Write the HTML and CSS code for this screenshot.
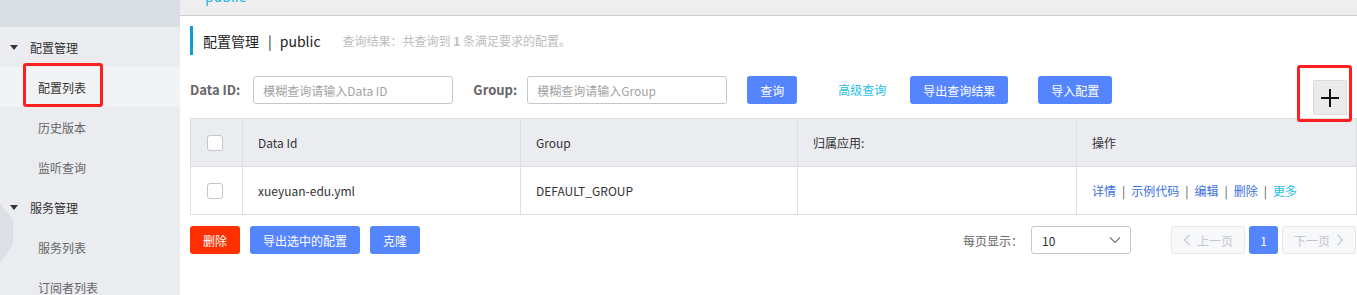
FILE: index.html
```html
<!DOCTYPE html>
<html lang="zh-CN">
<head>
    <meta charset="UTF-8">
    <title>配置列表</title>
    <link rel="stylesheet" href="styles.css">
</head>
<body>
    <div class="layout">
        <aside class="sidebar">
            <div class="sidebar-top"></div>
            <div class="nav-group"><span class="caret"></span>配置管理</div>
            <div class="nav-item active marked">配置列表</div>
            <div class="nav-item">历史版本</div>
            <div class="nav-item">监听查询</div>
            <div class="nav-group"><span class="caret"></span>服务管理</div>
            <div class="nav-item">服务列表</div>
            <div class="nav-item">订阅者列表</div>
            <div class="side-notch"></div>
        </aside>

        <main class="main">
            <div class="topbar"><span>public</span></div>

            <div class="content">
                <div class="page-title">
                    <span class="title-text">配置管理</span>
                    <span class="title-sep">|</span>
                    <span class="title-text">public</span>
                    <span class="query-result">查询结果：共查询到 <b>1</b> 条满足要求的配置。</span>
                </div>

                <div class="search-row">
                    <label class="search-label id-label">Data ID:</label>
                    <input class="search-input" type="text" placeholder="模糊查询请输入Data ID">
                    <label class="search-label group-label">Group:</label>
                    <input class="search-input" type="text" placeholder="模糊查询请输入Group">
                    <button class="btn btn-primary query-btn">查询</button>
                    <a class="adv-link">高级查询</a>
                    <button class="btn btn-primary export-btn">导出查询结果</button>
                    <button class="btn btn-primary import-btn">导入配置</button>
                    <button class="plus-btn marked-plus">
                        <svg width="20" height="20" viewBox="0 0 20 20"><path d="M1 10H19M10 1V19" stroke="#111" stroke-width="2"/></svg>
                    </button>
                </div>

                <table class="config-table">
                    <colgroup>
                        <col style="width:52px">
                        <col style="width:278px">
                        <col style="width:277px">
                        <col style="width:279px">
                        <col>
                    </colgroup>
                    <thead>
                        <tr>
                            <th><span class="checkbox"></span></th>
                            <th>Data Id</th>
                            <th>Group</th>
                            <th>归属应用:</th>
                            <th>操作</th>
                        </tr>
                    </thead>
                    <tbody>
                        <tr>
                            <td><span class="checkbox"></span></td>
                            <td>xueyuan-edu.yml</td>
                            <td>DEFAULT_GROUP</td>
                            <td></td>
                            <td class="actions">
                                <a>详情</a><span class="sep">|</span><a>示例代码</a><span class="sep">|</span><a>编辑</a><span class="sep">|</span><a>删除</a><span class="sep">|</span><a class="more">更多</a>
                            </td>
                        </tr>
                    </tbody>
                </table>

                <div class="footer-row">
                    <button class="btn btn-danger small-btn">删除</button>
                    <button class="btn btn-primary wide-btn">导出选中的配置</button>
                    <button class="btn btn-primary small-btn">克隆</button>

                    <div class="pager-area">
                        <span class="page-size-label">每页显示：</span>
                        <div class="page-select">
                            <span>10</span>
                            <svg width="12" height="8" viewBox="0 0 12 8"><path d="M1 1.5L6 6.5L11 1.5" fill="none" stroke="#777" stroke-width="1.2"/></svg>
                        </div>
                        <div class="pager">
                            <button class="page-btn disabled">
                                <svg width="8" height="12" viewBox="0 0 8 12"><path d="M6.5 1L1.5 6L6.5 11" fill="none" stroke="#c8cad0" stroke-width="1.4"/></svg>
                                上一页
                            </button>
                            <button class="page-btn current">1</button>
                            <button class="page-btn disabled">
                                下一页
                                <svg width="8" height="12" viewBox="0 0 8 12"><path d="M1.5 1L6.5 6L1.5 11" fill="none" stroke="#c8cad0" stroke-width="1.4"/></svg>
                            </button>
                        </div>
                    </div>
                </div>
            </div>
        </main>
    </div>
</body>
</html>
```

FILE: styles.css
```css
body {
    margin: 0;
    padding: 0;
    font-family: "Noto Sans CJK SC", "Noto Sans", sans-serif;
    font-size: 12px;
    color: #333;
    background: #fff;
    overflow: hidden;
}
.layout {
    display: flex;
    height: 295px;
}

/* sidebar */
.sidebar {
    position: relative;
    width: 180px;
    flex-shrink: 0;
    background: #eaecf0;
}
.sidebar-top {
    height: 27px;
    background: #d9dde4;
}
.nav-group {
    display: flex;
    align-items: center;
    height: 40px;
    padding-left: 30px;
    position: relative;
    color: #333;
}
.caret {
    position: absolute;
    left: 10px;
    top: 18px;
    width: 0;
    height: 0;
    border-left: 4px solid transparent;
    border-right: 4px solid transparent;
    border-top: 5px solid #333;
}
.nav-item {
    display: flex;
    align-items: center;
    height: 40px;
    padding-left: 38px;
    color: #666;
    position: relative;
}
.nav-item.active {
    background: #f2f3f5;
    color: #333;
}
.marked::after {
    content: "";
    position: absolute;
    left: 23px;
    top: -4px;
    width: 74px;
    height: 38px;
    border: 3px solid #ff1f1f;
    border-radius: 3px;
}
.side-notch {
    position: absolute;
    left: 0;
    top: 203px;
    width: 13px;
    height: 60px;
    background: #dcdfe5;
    clip-path: polygon(0 0, 100% 28%, 100% 70%, 0 100%);
}

/* main */
.main {
    flex: 1;
    min-width: 0;
}
.topbar {
    height: 15px;
    background: #eeeeee;
    border-bottom: 1px solid #cdcdcd;
    overflow: hidden;
    padding-left: 25px;
}
.topbar span {
    display: block;
    margin-top: -14px;
    font-size: 14px;
    color: #1fb6e6;
}
.content {
    padding-left: 10px;
}
.page-title {
    display: flex;
    align-items: center;
    height: 29px;
    margin-top: 10px;
    border-left: 3px solid #0e9bd6;
    padding-left: 10px;
}
.title-text {
    font-size: 14px;
    color: #222;
}
.title-sep {
    font-size: 14px;
    color: #222;
    margin: 0 8px 0 9px;
}
.query-result {
    margin-left: 22px;
    color: #bcbcbc;
    font-size: 12px;
}
.query-result b {
    font-weight: 700;
}

.search-row {
    display: flex;
    align-items: flex-start;
    height: 28px;
    margin-top: 21px;
}
.search-label {
    font-weight: 700;
    color: #666;
    font-size: 13px;
    line-height: 28px;
}
.id-label {
    margin-right: 13px;
}
.group-label {
    margin-left: 20px;
    margin-right: 10px;
}
.search-input {
    width: 200px;
    height: 28px;
    box-sizing: border-box;
    border: 1px solid #c4c6cf;
    border-radius: 3px;
    padding: 0 9px;
    font-family: inherit;
    font-size: 12px;
    color: #333;
    outline: none;
}
.search-input::placeholder {
    color: #a3a3a3;
}
.btn {
    height: 28px;
    padding: 0;
    border: none;
    border-radius: 3px;
    font-family: inherit;
    font-size: 12px;
    color: #fff;
    cursor: pointer;
}
.btn-primary {
    background: #5584ff;
}
.btn-danger {
    background: #ff3000;
}
.query-btn {
    margin-left: 20px;
    width: 50px;
}
.adv-link {
    margin-left: 41px;
    line-height: 28px;
    color: #23bde6;
}
.export-btn {
    margin-left: 24px;
    width: 98px;
}
.import-btn {
    margin-left: 30px;
    width: 74px;
}
.plus-btn {
    position: relative;
    margin-left: auto;
    margin-right: 10px;
    margin-top: 4px;
    width: 34px;
    height: 35px;
    padding: 0;
    display: flex;
    align-items: center;
    justify-content: center;
    background: #ebebeb;
    border: 1px solid #dcdcdc;
    border-radius: 1px;
}
.marked-plus::after {
    content: "";
    position: absolute;
    left: -17px;
    top: -16px;
    width: 49px;
    height: 51px;
    border: 3px solid #ff1f1f;
    border-radius: 3px;
}

/* table */
.config-table {
    width: 100%;
    margin-top: 14px;
    border-collapse: collapse;
    table-layout: fixed;
    border: 1px solid #dcdee3;
}
.config-table th,
.config-table td {
    height: 47px;
    padding: 0 0 0 15px;
    border: 1px solid #dcdee3;
    text-align: left;
    font-weight: 400;
    color: #333;
}
.config-table th {
    background: #ebecf0;
}
.config-table th:first-child,
.config-table td:first-child {
    padding-left: 16px;
}
.checkbox {
    display: block;
    width: 16px;
    height: 16px;
    box-sizing: border-box;
    border: 1px solid #c4c6cf;
    border-radius: 3px;
    background: #fff;
}
.actions a {
    color: #3a6fe0;
}
.actions a.more {
    color: #23bde6;
}
.sep {
    margin: 0 6px;
    color: #555;
}

/* footer */
.footer-row {
    display: flex;
    align-items: center;
    margin-top: 11px;
    gap: 10px;
}
.small-btn {
    width: 50px;
}
.wide-btn {
    width: 110px;
}
.pager-area {
    margin-left: auto;
    display: flex;
    align-items: center;
    margin-right: 1px;
}
.page-size-label {
    color: #666;
    margin-right: 8px;
}
.page-select {
    display: flex;
    align-items: center;
    justify-content: space-between;
    width: 100px;
    height: 28px;
    box-sizing: border-box;
    border: 1px solid #c4c6cf;
    border-radius: 3px;
    padding: 0 9px 0 10px;
    font-size: 12px;
    color: #333;
}
.pager {
    display: flex;
    gap: 4px;
    margin-left: 40px;
}
.page-btn {
    display: flex;
    align-items: center;
    justify-content: center;
    gap: 6px;
    height: 28px;
    box-sizing: border-box;
    border-radius: 3px;
    font-family: inherit;
    font-size: 12px;
    padding: 0;
}
.page-btn.disabled {
    width: 74px;
    background: #f7f8fa;
    border: 1px solid #e6e7eb;
    color: #c4c6cf;
}
.page-btn.current {
    width: 29px;
    background: #5584ff;
    border: none;
    color: #fff;
}
```
